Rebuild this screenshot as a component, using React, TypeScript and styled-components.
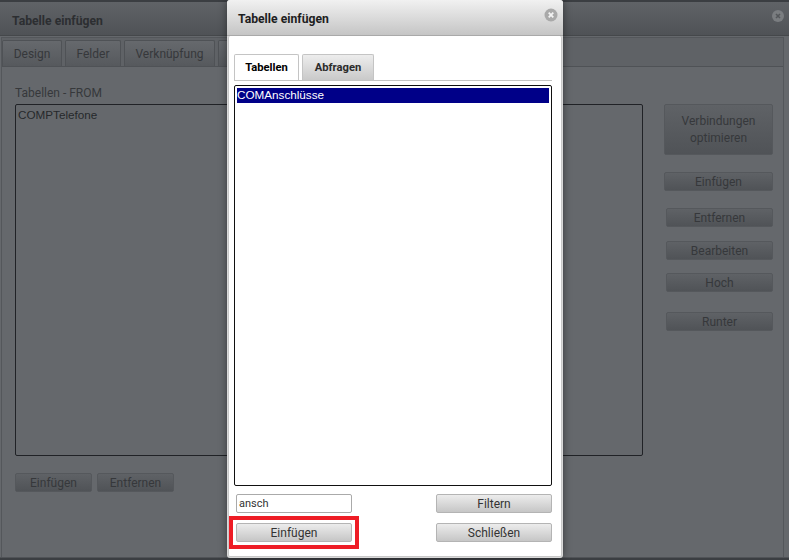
import React from "react";
import styled, { createGlobalStyle } from "styled-components";

const Global = createGlobalStyle`
  html, body { margin: 0; padding: 0; background: #3b3e42; }
  body { width: 789px; height: 560px; overflow: hidden; font-family: Roboto, "Open Sans", sans-serif; font-size: 12px; }
  #root { width: 789px; height: 560px; }
`;

const Page = styled.div`
  position: relative;
  width: 789px;
  height: 560px;
  padding: 2px 0 2px;
  box-sizing: border-box;
  overflow: hidden;
`;

/* ---------- dimmed window behind the dialog ---------- */
const BackWindow = styled.section`
  height: 556px;
  display: flex;
  flex-direction: column;
  background: #65686c;
  border-bottom: 1px solid #505357;
  box-sizing: border-box;
`;
const BackHeader = styled.header`
  height: 34px;
  flex: none;
  box-sizing: border-box;
  padding: 0 12px;
  display: flex;
  align-items: center;
  justify-content: space-between;
  background: linear-gradient(#606367, #4f5256);
  border-bottom: 1px solid #45484b;
`;
const BackTitle = styled.h1`
  margin: 4px 0 0;
  font-size: 12.2px;
  font-weight: 700;
  color: #2c2e31;
`;
const BackPanel = styled.div`
  flex: 1;
  margin: 1px 5px 0 1px;
  border-right: 1px solid #54575b;
  border-left: 1px solid #54575b;
  display: flex;
  flex-direction: column;
  min-height: 0;
`;
const BackTabs = styled.nav`
  height: 30px;
  flex: none;
  box-sizing: border-box;
  display: flex;
  gap: 3px;
  padding: 2px 0 0 0;
  background: #5f6266;
  border-top: 1px solid #54575b;
  border-bottom: 1px solid #4f5256;
`;
const BackTab = styled.div<{ $w: number }>`
  width: ${(p) => p.$w}px;
  box-sizing: border-box;
  display: flex;
  align-items: center;
  justify-content: center;
  color: #36383b;
  background: linear-gradient(#66696d, #56595d);
  border: 1px solid #4f5256;
  border-bottom: none;
  border-radius: 2px 2px 0 0;
`;
const BackBody = styled.div`
  flex: 1;
  display: grid;
  grid-template-columns: 628px 1fr;
  column-gap: 21px;
  padding: 18px 0 0 13px;
`;
const LeftColumn = styled.div`
  display: flex;
  flex-direction: column;
`;
const FieldLabel = styled.label`
  height: 19px;
  line-height: 16px;
  color: #36383b;
`;
const BackList = styled.div`
  height: 352px;
  box-sizing: border-box;
  border: 1px solid #202226;
  border-radius: 2px;
  padding: 2px;
  font: 11.7px/16px "Liberation Sans", Arial, sans-serif;
  color: #26282b;
`;
const BackButtonRow = styled.div`
  display: flex;
  gap: 5px;
  margin-top: 17px;
`;
const BackButton = styled.div<{ $w?: number; $h?: number; $top?: number; $left?: number }>`
  width: ${(p) => p.$w ?? 107}px;
  height: ${(p) => p.$h ?? 19}px;
  margin-top: ${(p) => p.$top ?? 0}px;
  margin-left: ${(p) => p.$left ?? 0}px;
  padding-top: 1px;
  box-sizing: border-box;
  display: flex;
  align-items: center;
  justify-content: center;
  text-align: center;
  line-height: 17px;
  color: #36383b;
  background: linear-gradient(#5f6266, #505357);
  border: 1px solid #55585c;
  border-radius: 2px;
`;
const RightColumn = styled.div`
  display: flex;
  flex-direction: column;
  padding-top: 19px;
`;

/* ---------- dialog ---------- */
const Dialog = styled.section`
  position: absolute;
  left: 227px;
  top: 0;
  width: 336px;
  height: 558px;
  box-sizing: border-box;
  display: flex;
  flex-direction: column;
  background: #d9d9d9;
  border-radius: 3px;
  box-shadow: 0 0 8px rgba(0, 0, 0, 0.45);
`;
const DialogHeader = styled.header`
  height: 36px;
  flex: none;
  box-sizing: border-box;
  padding: 0 5px 0 11px;
  display: flex;
  align-items: center;
  justify-content: space-between;
  background: linear-gradient(#f1f1f1, #c5c5c5);
  border-bottom: 1px solid #a9a9a9;
  border-radius: 3px 3px 0 0;
`;
const DialogTitle = styled.h2`
  margin: 2px 0 0;
  font-size: 12.2px;
  font-weight: 700;
  color: #1e1e1e;
`;
const CloseIcon = styled.svg`
  width: 14px;
  height: 14px;
  margin-top: -6px;
`;
const DialogBody = styled.div`
  flex: 1;
  margin: 0 1px 1px 1px;
  box-sizing: border-box;
  padding: 18px 9px 0 5px;
  background: #fff;
  border-radius: 2px;
  border: 1px solid #c8c8c8;
  border-top: none;
  display: flex;
  flex-direction: column;
`;
const TabStrip = styled.nav`
  height: 27px;
  flex: none;
  box-sizing: border-box;
  display: flex;
  gap: 3px;
  border-bottom: 1px solid #c4c4c4;
`;
const DialogTab = styled.div<{ $active?: boolean; $w: number }>`
  width: ${(p) => p.$w}px;
  box-sizing: border-box;
  display: flex;
  align-items: center;
  justify-content: center;
  font-size: 11.2px;
  font-weight: 700;
  color: ${(p) => (p.$active ? "#000" : "#2b2b2b")};
  background: ${(p) => (p.$active ? "#fff" : "linear-gradient(#ededed, #c9c9c9)")};
  border: 1px solid #c4c4c4;
  border-bottom: none;
  border-radius: 2px 2px 0 0;
`;
const ListBox = styled.div`
  height: 401px;
  margin-top: 4px;
  flex: none;
  box-sizing: border-box;
  padding: 2px;
  border: 1px solid #111;
  border-radius: 2px;
  background: #fff;
`;
const ListItem = styled.div<{ $selected?: boolean }>`
  height: 15px;
  box-sizing: border-box;
  font: 11.7px/14px "Liberation Sans", Arial, sans-serif;
  color: ${(p) => (p.$selected ? "#fff" : "#000")};
  background: ${(p) => (p.$selected ? "#000088" : "transparent")};
`;
const ControlGrid = styled.div`
  display: grid;
  grid-template-columns: 116px 116px;
  justify-content: space-between;
  row-gap: 10px;
  padding: 8px 0 0 2px;
`;
const TextField = styled.input`
  width: 116px;
  height: 19px;
  box-sizing: border-box;
  padding: 0 2px;
  border: 1px solid #aaa;
  border-radius: 2px;
  font: 11px Roboto, sans-serif;
  color: #333;
  outline: none;
`;
const DialogButton = styled.button`
  width: 116px;
  height: 19px;
  padding: 0;
  box-sizing: border-box;
  font: 12px Roboto, sans-serif;
  color: #333;
  background: linear-gradient(#ececec, #c6c6c6);
  border: 1px solid #b4b4b4;
  border-radius: 2px;
`;
const MarkedFrame = styled.div`
  margin: -7px;
  padding: 3px;
  border: 4px solid #ee1c25;
  display: flex;
  background: #fff;
`;

export default function App() {
  return (
    <Page>
      <Global />
      <BackWindow>
        <BackHeader>
          <BackTitle>Tabelle einfügen</BackTitle>
          <svg width="12" height="12" viewBox="0 0 12 12" style={{ marginRight: -7, marginTop: -6 }}>
            <circle cx="6" cy="6" r="6" fill="#7a7d80" />
            <path d="M4 4l4 4M8 4l-4 4" stroke="#54575a" strokeWidth="1.6" />
          </svg>
        </BackHeader>
        <BackPanel>
          <BackTabs>
            <BackTab $w={60}>Design</BackTab>
            <BackTab $w={56}>Felder</BackTab>
            <BackTab $w={91}>Verknüpfung</BackTab>
            <BackTab $w={60} />
          </BackTabs>
          <BackBody>
            <LeftColumn>
              <FieldLabel>Tabellen - FROM</FieldLabel>
              <BackList>COMPTelefone</BackList>
              <BackButtonRow>
                <BackButton $w={77}>Einfügen</BackButton>
                <BackButton $w={77}>Entfernen</BackButton>
              </BackButtonRow>
            </LeftColumn>
            <RightColumn>
              <BackButton $w={109} $h={51}>Verbindungen<br />optimieren</BackButton>
              <BackButton $w={109} $top={17}>Einfügen</BackButton>
              <BackButton $left={2} $top={17}>Entfernen</BackButton>
              <BackButton $left={2} $top={14}>Bearbeiten</BackButton>
              <BackButton $left={2} $top={13}>Hoch</BackButton>
              <BackButton $left={2} $top={20}>Runter</BackButton>
            </RightColumn>
          </BackBody>
        </BackPanel>
      </BackWindow>

      <Dialog>
        <DialogHeader>
          <DialogTitle>Tabelle einfügen</DialogTitle>
          <CloseIcon viewBox="0 0 14 14">
            <circle cx="7" cy="7" r="6.5" fill="#a9a9a9" />
            <path d="M4.7 4.7l4.6 4.6M9.3 4.7l-4.6 4.6" stroke="#f2f2f2" strokeWidth="1.8" />
          </CloseIcon>
        </DialogHeader>
        <DialogBody>
          <TabStrip>
            <DialogTab $active $w={65}>Tabellen</DialogTab>
            <DialogTab $w={72}>Abfragen</DialogTab>
          </TabStrip>
          <ListBox>
            <ListItem $selected>COMAnschlüsse</ListItem>
          </ListBox>
          <ControlGrid>
            <TextField defaultValue="ansch" />
            <DialogButton>Filtern</DialogButton>
            <MarkedFrame>
              <DialogButton>Einfügen</DialogButton>
            </MarkedFrame>
            <DialogButton>Schließen</DialogButton>
          </ControlGrid>
        </DialogBody>
      </Dialog>
    </Page>
  );
}
